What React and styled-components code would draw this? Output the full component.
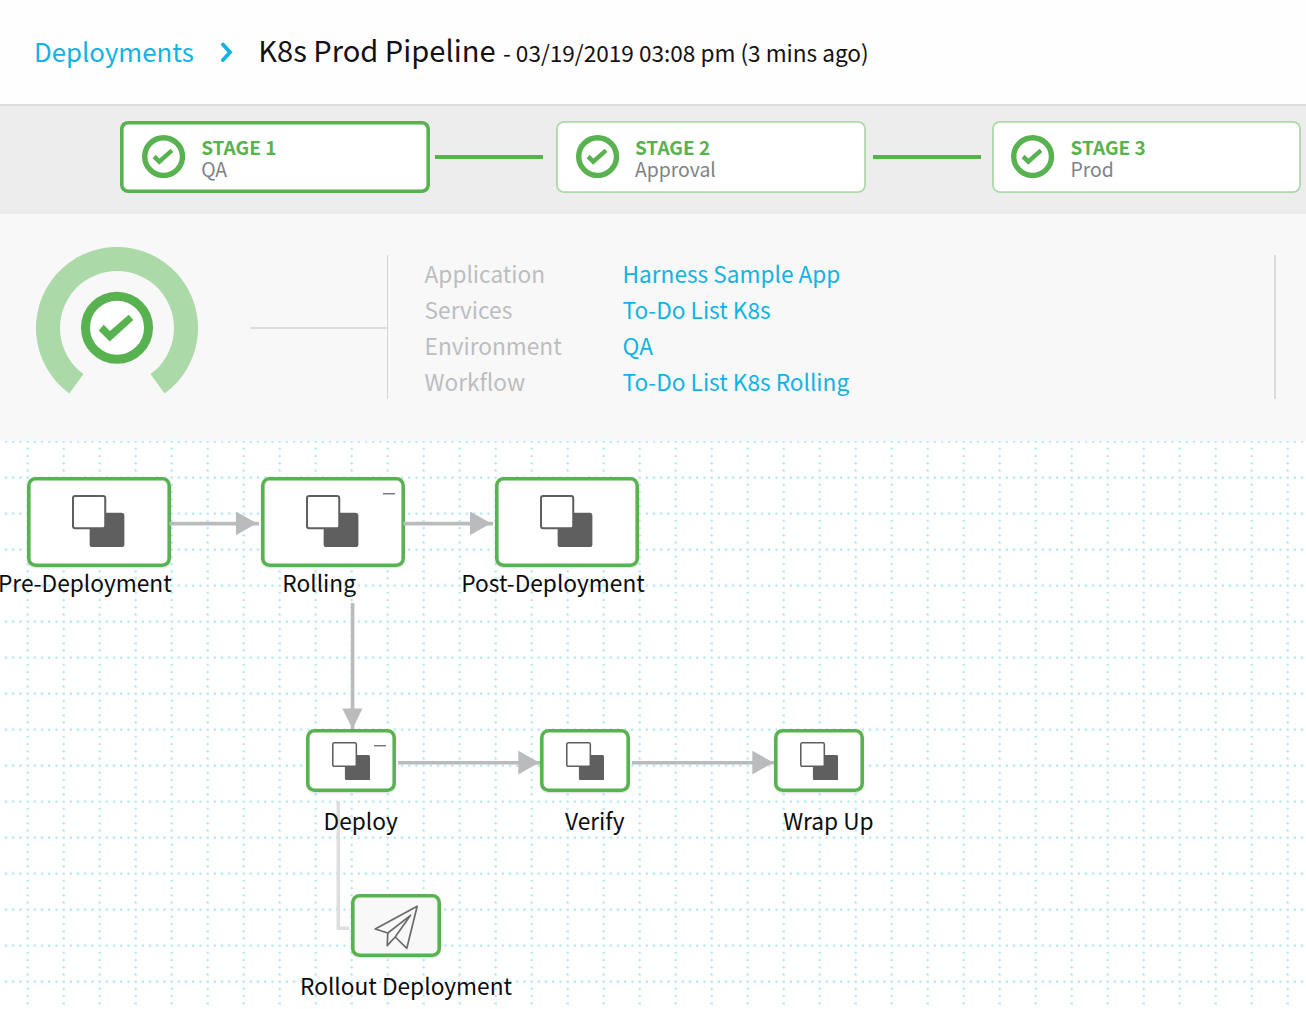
import React from "react";
import styled, { createGlobalStyle } from "styled-components";

const GREEN = "#58b250";
const PALE_GREEN = "#abd9a8";
const BLUE = "#12b3e3";
const ARROW = "#b9bbbd";
const ICON_GREY = "#5f5f5f";

const GlobalStyle = createGlobalStyle`
  * { box-sizing: border-box; }
  body {
    margin: 0;
    background: #fff;
    font-family: "Noto Sans CJK SC", "Noto Sans", sans-serif;
    overflow: hidden;
  }
`;

const Page = styled.div`
  display: flex;
  flex-direction: column;
  width: 1306px;
  height: 1009px;
  overflow: hidden;
  white-space: nowrap;
`;

const Header = styled.header`
  flex: none;
  display: flex;
  align-items: baseline;
  height: 106px;
  padding: 29px 0 0 34px;
  background: #fefefe;
  border-bottom: 2px solid #dcdcdc;
  line-height: 40px;
`;

const Crumb = styled.a`
  width: 186px;
  font-size: 25.8px;
  color: ${BLUE};
`;

const Chevron = styled.svg`
  flex: none;
  width: 14px;
  height: 20px;
  margin-right: 24.2px;
`;

const Title = styled.h1`
  margin: 0;
  font-size: 29.1px;
  font-weight: 400;
  color: #141014;
`;

const Stamp = styled.span`
  margin-left: 7.4px;
  font-size: 22.6px;
  color: #141014;
`;

const StageBar = styled.section`
  flex: none;
  display: flex;
  align-items: flex-start;
  height: 108px;
  padding: 14.8px 0 0 120.4px;
  background: #ededed;
`;

const StageCard = styled.div`
  flex: none;
  display: flex;
  align-items: center;
  width: 309.6px;
  height: 72px;
  padding-left: ${(p) => (p.$active ? "21.6px" : "19.8px")};
  border-radius: 8px;
  background: #fff;
  box-shadow: inset 0 0 0 ${(p) => (p.$active ? `3.6px ${GREEN}` : `1.8px ${PALE_GREEN}`)};
`;

const StageLink = styled.div`
  flex: none;
  width: 108px;
  height: 3.6px;
  margin: 34.2px ${(p) => p.$after}px 0 ${(p) => p.$before}px;
  background: ${GREEN};
`;

const StageText = styled.div`
  display: flex;
  flex-direction: column;
  margin-left: 16px;
  padding-top: 2px;
`;

const StageName = styled.div`
  font-size: 19px;
  font-weight: 700;
  line-height: 22px;
  color: ${GREEN};
`;

const StageKind = styled.div`
  font-size: 19.4px;
  line-height: 22px;
  color: #808285;
`;

const Ring = styled.svg`
  display: block;
  flex: none;
  width: ${(p) => p.$size}px;
  height: ${(p) => p.$size}px;
`;

const Summary = styled.section`
  flex: none;
  display: flex;
  height: 227px;
  padding-left: 36px;
  background: #f8f8f8;
`;

const Gauge = styled.svg`
  flex: none;
  width: 162px;
  height: 162px;
  margin: 32.6px 52px 0 0;
`;

const Lead = styled.div`
  flex: none;
  width: 137px;
  height: 2px;
  margin-top: 113px;
  background: #dddfdf;
`;

const Details = styled.div`
  flex: none;
  width: 889px;
  height: 144px;
  margin-top: 41px;
  padding: 1px 0 0 36.6px;
  border-left: 1px solid #d2d5d5;
  border-right: 2px solid #dcdcdc;
`;

const DetailRow = styled.div`
  display: grid;
  grid-template-columns: 198px 1fr;
  height: 36px;
  line-height: 36px;
  font-size: 22.65px;
  color: #bbbdbf;
`;

const DetailLink = styled.a`
  color: ${BLUE};
`;

const Canvas = styled.main`
  position: relative;
  flex: 1;
  background: #fff;
  overflow: hidden;
`;

const Layer = styled.svg`
  position: absolute;
  inset: 0;
  width: 1306px;
  height: 568px;
`;

const Node = styled.div`
  position: absolute;
  left: ${(p) => p.$x}px;
  top: ${(p) => p.$y}px;
  width: ${(p) => (p.$small ? 90 : 144)}px;
  height: ${(p) => (p.$small ? 63 : 90)}px;
  padding: ${(p) => (p.$small ? "13px 0 0 25.6px" : "18px 0 0 45.4px")};
  border-radius: 8.5px;
  background: ${(p) => (p.$tint ? "#f8f8f8" : "#fff")};
  box-shadow: inset 0 0 0 3.6px ${GREEN}, 0 1px 2px rgba(0, 0, 0, 0.15);
`;

const NodeIcon = styled.svg`
  display: block;
  width: ${(p) => (p.$small ? 38.4 : 52.4)}px;
  height: ${(p) => (p.$small ? 38.4 : 52.4)}px;
`;

const Collapse = styled.span`
  position: absolute;
  top: 16px;
  right: 10.5px;
  width: 11.5px;
  height: 2px;
  background: linear-gradient(#777 50%, #c4c4c4 50%);
`;

const NodeLabel = styled.div`
  position: absolute;
  left: ${(p) => p.$x}px;
  top: ${(p) => p.$y}px;
  font-size: 22.7px;
  line-height: 30px;
  color: #0c0c0c;
`;

const Plane = styled.svg`
  display: block;
  width: 44px;
  height: 44px;
  margin: -2.3px 0 0 -2.9px;
`;

const CHECK = "M-18.3 2.7L-13.3-3L-7 3.3L11.7-13L16.3-7.7L-7.3 13.7Z";

const CheckRing = ({ size }) => (
  <Ring $size={size} viewBox="-36 -36 72 72">
    <circle r="31.5" fill="#fff" stroke={GREEN} strokeWidth="9" />
    <path d={CHECK} fill={GREEN} />
  </Ring>
);

const Squares = ({ small }) => {
  const w = small ? 2.1 : 2;
  return (
    <NodeIcon $small={small} viewBox="0 0 52 52">
      <rect x="17.5" y="17.7" width="34.5" height="34.3" rx="3" fill={ICON_GREY} />
      <rect x={w / 2} y={w / 2} width={34 - w} height={34 - w} rx="2.2" fill="#fff" stroke={ICON_GREY} strokeWidth={w} />
    </NodeIcon>
  );
};

const RightArrow = ({ from, head, to, y }) => (
  <g>
    <path d={`M${from} ${y}H${to}`} stroke={ARROW} strokeWidth="3.6" />
    <path d={`M${head} ${y - 12}L${head + 21} ${y - 0.3}L${head} ${y + 11.6}Z`} fill={ARROW} />
  </g>
);

const stages = [
  { name: "STAGE 1", kind: "QA", active: true },
  { name: "STAGE 2", kind: "Approval", before: 5.4, after: 12.6 },
  { name: "STAGE 3", kind: "Prod", before: 7.3, after: 10.7 },
];

const details = [
  ["Application", "Harness Sample App"],
  ["Services", "To-Do List K8s"],
  ["Environment", "QA"],
  ["Workflow", "To-Do List K8s Rolling"],
];

const nodes = [
  { label: "Pre-Deployment", x: 27, y: 36, lx: -2, ly: 127 },
  { label: "Rolling", x: 261, y: 36, lx: 282.3, ly: 127, open: true },
  { label: "Post-Deployment", x: 495, y: 36, lx: 461.3, ly: 127 },
  { label: "Deploy", x: 306, y: 287.8, lx: 323.6, ly: 365, small: true, open: true },
  { label: "Verify", x: 540, y: 287.8, lx: 565, ly: 365, small: true },
  { label: "Wrap Up", x: 774, y: 287.8, lx: 783.2, ly: 365, small: true },
  { label: "Rollout Deployment", x: 351, y: 453.3, lx: 300, ly: 530, small: true, plane: true },
];

export default function App() {
  return (
    <Page>
      <GlobalStyle />
      <Header>
        <Crumb>Deployments</Crumb>
        <Chevron viewBox="0 0 14 20">
          <path d="M3 2.5L10 10.2L3 18" fill="none" stroke={BLUE} strokeWidth="3.8" strokeLinecap="round" />
        </Chevron>
        <Title>K8s Prod Pipeline</Title>
        <Stamp>- 03/19/2019 03:08 pm (3 mins ago)</Stamp>
      </Header>
      <StageBar>
        {stages.map((s) => (
          <React.Fragment key={s.name}>
            {s.before && <StageLink $before={s.before} $after={s.after} />}
            <StageCard $active={s.active}>
              <CheckRing size={43.2} />
              <StageText>
                <StageName>{s.name}</StageName>
                <StageKind>{s.kind}</StageKind>
              </StageText>
            </StageCard>
          </React.Fragment>
        ))}
      </StageBar>
      <Summary>
        <Gauge viewBox="-81 -81 162 162">
          <path
            d="M-47.6 65.5A81 81 0 1 1 47.6 65.5L33.5 46.1A57 57 0 1 0 -33.5 46.1Z"
            fill={PALE_GREEN}
          />
          <circle r="31.5" cy="-0.3" fill="#fff" stroke={GREEN} strokeWidth="9" />
          <path d={CHECK} fill={GREEN} transform="translate(0 -0.3)" />
        </Gauge>
        <Lead />
        <Details>
          {details.map(([k, v]) => (
            <DetailRow key={k}>
              <span>{k}</span>
              <DetailLink>{v}</DetailLink>
            </DetailRow>
          ))}
        </Details>
      </Summary>
      <Canvas>
        <Layer>
          <defs>
            <pattern id="dots" x="24.1" y="-2.9" width="36" height="36" patternUnits="userSpaceOnUse">
              {[0, 1, 2, 3, 4].map((i) => (
                <g key={i} fill="#b6e8f2">
                  <circle cx={3.6 + i * 7.2} cy="3.6" r="1.3" />
                  {i > 0 && <circle cx="3.6" cy={3.6 + i * 7.2} r="1.3" />}
                </g>
              ))}
            </pattern>
          </defs>
          <rect width="1306" height="568" fill="url(#dots)" />
          <path d="M338.3 360V487.2H349" fill="none" stroke="#dedede" strokeWidth="3.6" />
        </Layer>
        {nodes.map((n) => (
          <React.Fragment key={n.label}>
            <Node $x={n.x} $y={n.y} $small={n.small} $tint={n.plane}>
              {n.plane ? (
                <Plane viewBox="0 0 44 44" fill="none" stroke="#6a6a6a" strokeWidth="1.7" strokeLinejoin="round">
                  <path d="M1.2 24L43.2 1.3L32.8 43.3L21.2 32L13.2 40.7L13.8 28Z" />
                  <path d="M13.8 28L36.5 10.3L21.2 32" />
                </Plane>
              ) : (
                <Squares small={n.small} />
              )}
              {n.open && <Collapse />}
            </Node>
            <NodeLabel $x={n.lx} $y={n.ly}>{n.label}</NodeLabel>
          </React.Fragment>
        ))}
        <Layer>
          <RightArrow from={169.3} head={236} to={259} y={82.6} />
          <RightArrow from={403.3} head={470} to={493} y={82.6} />
          <RightArrow from={398} head={518.3} to={540} y={321.8} />
          <RightArrow from={632} head={752.3} to={774} y={321.8} />
          <path d="M352.6 162V288" stroke={ARROW} strokeWidth="3.6" />
          <path d="M342.3 267.4H362.4L352.6 288Z" fill={ARROW} />
        </Layer>
      </Canvas>
    </Page>
  );
}
